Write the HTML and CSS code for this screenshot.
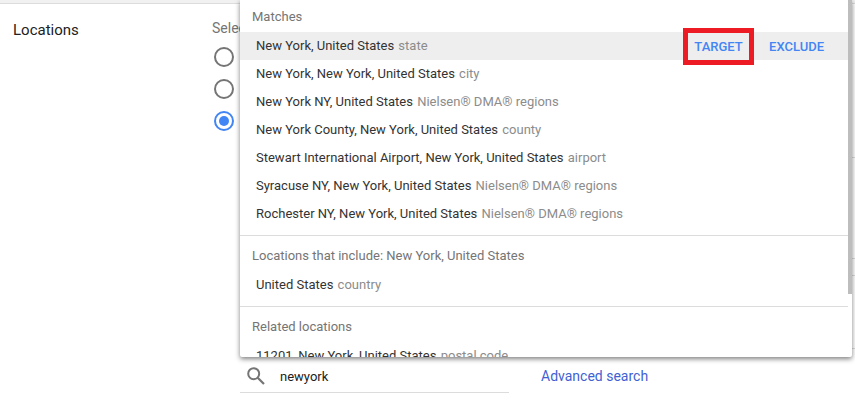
FILE: index.html
```html
<!DOCTYPE html>
<html lang="en">
<head>
    <meta charset="UTF-8">
    <meta name="viewport" content="width=device-width, initial-scale=1.0">
    <title>Locations</title>

    <link rel="stylesheet" href="styles.css">
</head>
<body>

    <div class="top-strip"></div>

    <main class="setting">
        <h1 class="setting-title">Locations</h1>

        <form class="setting-body">
            <fieldset class="choices">
                <legend>Select</legend>
                <input type="radio" name="scope" value="all" aria-label="All countries and territories">
                <input type="radio" name="scope" value="home" aria-label="Home country">
                <input type="radio" name="scope" value="other" aria-label="Enter another location" checked>
            </fieldset>

            <div class="search-row">
                <label class="search-box">
                    <svg class="search-icon" viewBox="0 0 18 18" aria-hidden="true">
                        <circle cx="6.7" cy="6.7" r="5.5" fill="none" stroke="#757575" stroke-width="2"/>
                        <path d="M10.7 10.7 L17 17" fill="none" stroke="#757575" stroke-width="2.2"/>
                    </svg>
                    <input type="text" name="location" value="newyork" aria-label="Location">
                </label>
                <a class="advanced" href="#">Advanced search</a>
            </div>
        </form>

        <aside class="side">
            <div class="side-card side-first"></div>
            <div class="side-card side-last"></div>
        </aside>

        <div class="suggestions">
            <section class="group">
                <h2>Matches</h2>
                <ul>
                    <li class="active">
                        <span class="place">New York, United States <small>state</small></span>
                        <button type="button" class="action marked">TARGET</button>
                        <button type="button" class="action">EXCLUDE</button>
                    </li>
                    <li><span class="place">New York, New York, United States <small>city</small></span></li>
                    <li><span class="place">New York NY, United States <small>Nielsen® DMA® regions</small></span></li>
                    <li><span class="place">New York County, New York, United States <small>county</small></span></li>
                    <li><span class="place">Stewart International Airport, New York, United States <small>airport</small></span></li>
                    <li><span class="place">Syracuse NY, New York, United States <small>Nielsen® DMA® regions</small></span></li>
                    <li><span class="place">Rochester NY, New York, United States <small>Nielsen® DMA® regions</small></span></li>
                </ul>
            </section>
            <section class="group">
                <h2>Locations that include: New York, United States</h2>
                <ul>
                    <li><span class="place">United States <small>country</small></span></li>
                </ul>
            </section>
            <section class="group">
                <h2>Related locations</h2>
                <ul>
                    <li><span class="place">11201, New York, United States <small>postal code</small></span></li>
                </ul>
            </section>
            <div class="scroll-thumb"></div>
        </div>
    </main>

</body>
</html>
```

FILE: styles.css
```css
* {
    box-sizing: border-box;
}

body {
    margin: 0;
    background-color: #fff;
    color: #212121;
    font-family: Roboto, Arial, sans-serif;
    font-size: 13px;
}

.top-strip {
    height: 4px;
    background-color: #f1f1f1;
    border-bottom: 1px solid #dcdcdc;
}

.setting {
    display: flex;
}

.setting-title {
    width: 212px;
    margin: 0;
    padding: 16px 0 0 13px;
    font-size: 15px;
    font-weight: 400;
    line-height: 20px;
}

.setting-body {
    flex: 1;
}

.choices {
    display: flex;
    flex-direction: column;
    gap: 12px;
    margin: 0;
    padding: 0 2px;
    border: none;
}

.choices legend {
    padding: 14px 0 9px;
    margin-left: -2px;
    color: #757575;
    font-size: 14px;
    line-height: 20px;
}

.choices input {
    appearance: none;
    width: 20px;
    height: 20px;
    margin: 0;
    border: 2px solid #757575;
    border-radius: 50%;
}

.choices input:checked {
    padding: 3px;
    border-color: #4285f4;
    background: #4285f4 content-box;
}

.search-row {
    display: flex;
    align-items: center;
    gap: 32px;
    margin: 229px 0 16px 28px;
}

.search-box {
    display: flex;
    align-items: center;
    gap: 15px;
    width: 269px;
    height: 33px;
    padding-left: 7px;
    border-bottom: 1px solid #dcdcdc;
}

.search-icon {
    width: 18px;
    height: 18px;
}

.search-box input {
    flex: 1;
    min-width: 0;
    padding: 0;
    border: none;
    outline: none;
    color: #212121;
    font: inherit;
}

.advanced {
    padding-bottom: 2px;
    color: #3f62d2;
    font-size: 14px;
    text-decoration: none;
}

.side {
    width: 12px;
    padding-top: 153px;
}

.side-card {
    border: 1px solid #dcdcdc;
    border-right: none;
}

.side-first {
    height: 102px;
}

.side-last {
    height: 74px;
    margin-top: 16px;
}

/* open list, lies over the form */
.suggestions {
    position: absolute;
    top: 0;
    left: 240px;
    right: 3px;
    height: 357px;
    padding-right: 4px;
    overflow: hidden;
    background-color: #fff;
    border-radius: 0 0 2px 2px;
    box-shadow: 0 2px 5px rgba(0, 0, 0, 0.5);
}

.group {
    padding: 4px 0 7px;
    border-bottom: 1px solid #dcdcdc;
}

.group:first-child {
    padding-top: 1px;
}

.group h2 {
    margin: 0;
    padding-left: 12px;
    color: #757575;
    font-size: 13px;
    font-weight: 400;
    line-height: 31px;
}

.group ul {
    margin: 0;
    padding: 0;
    list-style: none;
}

.group li {
    display: flex;
    align-items: center;
    height: 28px;
    padding: 0 16px;
}

.group li.active {
    background-color: #eee;
}

.place {
    flex: 1;
    padding-bottom: 2px;
    color: #333;
}

.place small {
    margin-left: 1px;
    color: #8c8c8c;
    font-size: 13px;
}

.action {
    height: 37px;
    padding: 0 8px;
    border: none;
    background: none;
    color: #4285f4;
    font: 500 13px Roboto, Arial, sans-serif;
    cursor: pointer;
}

.action.marked {
    width: 71px;
    margin-right: 7px;
    padding: 0;
    border: 5px solid #ed1c24;
}

.scroll-thumb {
    position: absolute;
    top: 0;
    right: 0;
    width: 4px;
    height: 294px;
    background-color: #bdbdbd;
}
```
